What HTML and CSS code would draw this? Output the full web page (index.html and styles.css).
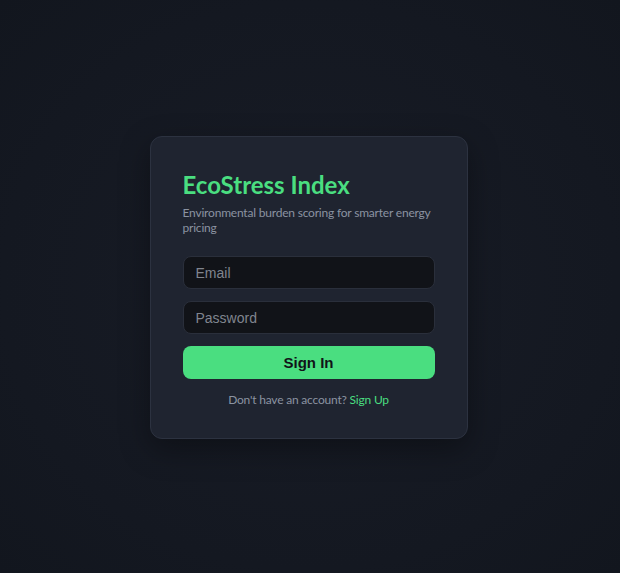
FILE: index.html
```html
<!DOCTYPE html>
<html lang="en">
<head>
<meta charset="utf-8">
<title>EcoStress Index</title>
<link rel="stylesheet" href="styles.css">
</head>
<body>
<main class="page">
  <section class="card">
    <h1 class="title">EcoStress Index</h1>
    <p class="subtitle">Environmental burden scoring for smarter energy pricing</p>
    <form class="form">
      <input class="field" type="email" placeholder="Email">
      <input class="field" type="password" placeholder="Password">
      <button class="submit" type="button">Sign In</button>
    </form>
    <p class="footer">Don't have an account? <a class="link" href="#">Sign Up</a></p>
  </section>
</main>
</body>
</html>
```
FILE: styles.css
```css
* { box-sizing: border-box; }
html, body { margin: 0; padding: 0; }
body {
  background: radial-gradient(ellipse at center, #181c26 0%, #141821 70%, #12161e 100%);
  font-family: Lato, "Noto Sans", sans-serif;
  min-height: 100vh;
}
.page {
  min-height: 100vh;
  display: flex;
  align-items: center;
  justify-content: center;
}
.card {
  width: 318px;
  margin: 2px 3px 0 0;
  background: #1f2430;
  border: 1px solid #2c3240;
  border-radius: 12px;
  padding: 32px 32px 30px;
  box-shadow: 0 10px 30px rgba(0,0,0,0.35);
}
.title {
  margin: 0 0 4px;
  color: #4ade80;
  font-size: 24px;
  font-weight: 700;
  line-height: 32px;
}
.subtitle {
  margin: 0 0 21px;
  color: #8b93a1;
  font-size: 12px;
  letter-spacing: -0.2px;
  line-height: 15px;
}
.form {
  display: flex;
  flex-direction: column;
  gap: 12px;
}
.field {
  height: 33px;
  width: 100%;
  background: #111318;
  border: 1px solid #2a2f3b;
  border-radius: 8px;
  padding: 0 12px;
  color: #e5e7eb;
  font-family: "Liberation Sans", Arial, sans-serif;
  font-size: 14px;
  outline: none;
}
.field::placeholder { color: #80858f; }
.submit {
  height: 33px;
  width: 100%;
  background: #4ade80;
  border: none;
  border-radius: 8px;
  color: #111318;
  font-family: "Liberation Sans", Arial, sans-serif;
  font-size: 15px;
  font-weight: 700;
}
.footer {
  margin: 13px 0 0;
  text-align: center;
  color: #8b93a1;
  font-size: 12px;
  letter-spacing: -0.2px;
  line-height: 16px;
}
.link {
  color: #4ade80;
  text-decoration: none;
}
```
